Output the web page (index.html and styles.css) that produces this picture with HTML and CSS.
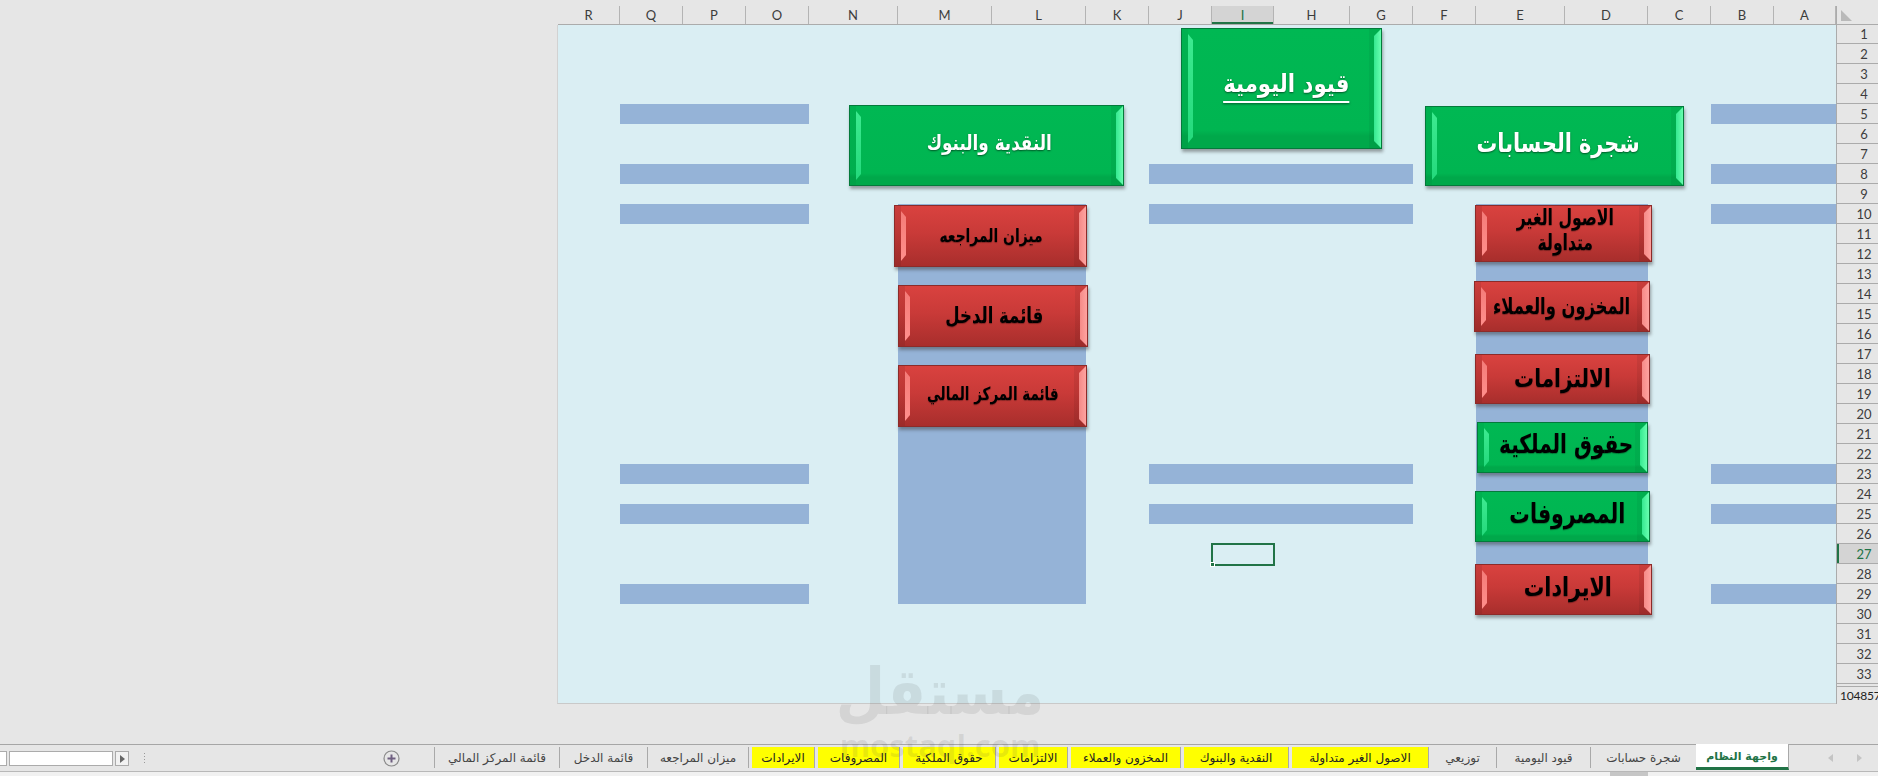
FILE: index.html
```html
<!DOCTYPE html>
<html lang="ar">
<head><meta charset="utf-8"><title>واجهة النظام</title><link rel="stylesheet" href="styles.css"></head>
<body>
<div class="app">
  <div class="colheads">
    <span>R</span><span>Q</span><span>P</span><span>O</span><span>N</span><span>M</span><span>L</span><span>K</span><span>J</span><span class="sel">I</span><span>H</span><span>G</span><span>F</span><span>E</span><span>D</span><span>C</span><span>B</span><span>A</span>
  </div>
  <div class="corner"><i></i></div>

  <div class="sheet">
    <div class="bar c-left r5"></div><div class="bar c-left r8"></div><div class="bar c-left r10"></div><div class="bar c-left r23"></div><div class="bar c-left r25"></div><div class="bar c-left r29"></div>
    <div class="bar c-mid r8"></div><div class="bar c-mid r10"></div><div class="bar c-mid r23"></div><div class="bar c-mid r25"></div>
    <div class="bar c-right r5"></div><div class="bar c-right r8"></div><div class="bar c-right r10"></div><div class="bar c-right r23"></div><div class="bar c-right r25"></div><div class="bar c-right r29"></div>
    <div class="bar c-ml block-ml"></div>
    <div class="bar c-ed block-ed"></div>
    <div class="cell-sel"><i></i></div>

    <div class="btn green white b-qoyud"><span><u>قيود اليومية</u></span></div>
    <div class="btn green white b-cash"><span>النقدية والبنوك</span></div>
    <div class="btn green white b-tree"><span>شجرة الحسابات</span></div>
    <div class="btn red b-mizan"><span>ميزان المراجعه</span></div>
    <div class="btn red b-income"><span>قائمة الدخل</span></div>
    <div class="btn red b-fin"><span>قائمة المركز المالي</span></div>
    <div class="btn red b-assets"><span>الاصول الغير<br>متداولة</span></div>
    <div class="btn red b-inv"><span>المخزون والعملاء</span></div>
    <div class="btn red b-liab"><span>الالتزامات</span></div>
    <div class="btn green b-eq"><span>حقوق الملكية</span></div>
    <div class="btn green b-exp"><span>المصروفات</span></div>
    <div class="btn red b-rev"><span>الايرادات</span></div>
  </div>

  <div class="rowheads">
    <span>1</span><span>2</span><span>3</span><span>4</span><span>5</span><span>6</span><span>7</span><span>8</span><span>9</span><span>10</span><span>11</span><span>12</span><span>13</span><span>14</span><span>15</span><span>16</span><span>17</span><span>18</span><span>19</span><span>20</span><span>21</span><span>22</span><span>23</span><span>24</span><span>25</span><span>26</span><span class="sel">27</span><span>28</span><span>29</span><span>30</span><span>31</span><span>32</span><span>33</span><span class="gap"></span><span class="last">1048576</span>
  </div>

  <div class="tabbar">
    <div class="hscroll">
      <b class="sb-stub"></b><b class="sb-track"></b>
      <b class="sb-btn"><svg width="5" height="8" viewBox="0 0 5 8"><path d="M0 0 5 4 0 8Z" fill="#666"/></svg></b>
      <svg class="sb-dots" width="3" height="11" viewBox="0 0 3 11"><path d="M1 0h1v1H1zM1 3h1v1H1zM1 6h1v1H1zM1 9h1v1H1z" fill="#999"/></svg>
    </div>
    <div class="plus">
      <svg width="17" height="17" viewBox="0 0 17 17"><circle cx="8.5" cy="8.5" r="7.5" fill="none" stroke="#8a8a8a" stroke-width="1.2"/><path d="M8.5 4.5v8M4.5 8.5h8" stroke="#6f5f80" stroke-width="2"/></svg>
    </div>
    <div class="tabs">
      <div class="tab">قائمة المركز المالي</div>
      <div class="tab">قائمة الدخل</div>
      <div class="tab">ميزان المراجعه</div>
      <div class="tab yellow">الايرادات</div>
      <div class="tab yellow">المصروفات</div>
      <div class="tab yellow">حقوق الملكية</div>
      <div class="tab yellow">الالتزامات</div>
      <div class="tab yellow">المخزون والعملاء</div>
      <div class="tab yellow">النقدية والبنوك</div>
      <div class="tab yellow">الاصول الغير متداولة</div>
      <div class="tab">توزيعي</div>
      <div class="tab">قيود اليومية</div>
      <div class="tab">شجرة حسابات</div>
      <div class="tab active">واجهة النظام</div>
    </div>
    <div class="tabnav">
      <svg width="5" height="8" viewBox="0 0 5 8"><path d="M5 0 0 4 5 8Z" fill="#c4c4c4"/></svg>
      <svg width="5" height="8" viewBox="0 0 5 8"><path d="M0 0 5 4 0 8Z" fill="#c4c4c4"/></svg>
    </div>
  </div>
  <div class="statusline"><i></i></div>

  <div class="watermark"><span class="wm-ar">مستقل</span><span class="wm-en">mostaql.com</span></div>
</div>
</body>
</html>
```
FILE: styles.css
```css
* { box-sizing: border-box; }
html, body { margin: 0; height: 100%; overflow: hidden; background: #e6e6e6; }

.app {
  position: relative;
  width: 1878px;
  height: 776px;
  overflow: hidden;
  display: grid;
  grid-template-columns: 558px 1278px 42px;
  grid-template-rows: 6px 19px 679px 40px 28px 4px;
  font-family: Lato, "Liberation Sans", sans-serif;
  color: #333;
}

/* column headers */
.colheads {
  grid-column: 2;
  grid-row: 2;
  display: grid;
  grid-template-columns: 62px 63px 63px 63px 89px 94px 94px 63px 63px 62px 76px 63px 63px 89px 83px 63px 63px 62px;
  border-bottom: 1px solid #ababab;
}
.colheads span {
  display: flex;
  align-items: center;
  justify-content: center;
  font-size: 13px;
  color: #3c3c3c;
  border-right: 1px solid #b4b4b4;
}
.colheads span.sel {
  background: #d4d4d4;
  color: #217346;
  box-shadow: inset 0 -2px 0 #217346;
}
.corner {
  grid-column: 3;
  grid-row: 2;
  border-left: 1px solid #ababab;
  border-bottom: 1px solid #ababab;
  padding: 4px 0 0 4px;
}
.corner i {
  display: block;
  width: 11px;
  height: 11px;
  background: #b9b9b9;
  clip-path: polygon(0 0, 100% 100%, 0 100%);
}

/* worksheet */
.sheet {
  grid-column: 2;
  grid-row: 3;
  position: relative;
  background: #daeef3;
  border-left: 1px solid #d2d2d2;
  border-bottom: 1px solid #c9c9c9;
  margin-left: -1px;
  display: grid;
  grid-template-columns: 62px 63px 63px 63px 89px 94px 94px 63px 63px 62px 76px 63px 63px 89px 83px 63px 63px 62px;
  grid-template-rows: 19px repeat(32, 20px) 3px 16px;
}
.bar { background: #95b3d7; }
.c-left { grid-column: 2 / 5; }
.c-mid { grid-column: 9 / 13; }
.c-right { grid-column: 17 / 19; }
.c-ml { grid-column: 6 / 8; }
.c-ed { grid-column: 14 / 16; }
.r5 { grid-row: 5; }
.r8 { grid-row: 8; }
.r10 { grid-row: 10; }
.r23 { grid-row: 23; }
.r25 { grid-row: 25; }
.r29 { grid-row: 29; }
.block-ml { grid-row: 10 / 30; }
.block-ed { grid-row: 10 / 29; }
.cell-sel {
  grid-column: 10;
  grid-row: 27;
  position: relative;
  margin: -1px -1px -2px -1px;
  border: 2px solid #217346;
}
.cell-sel i {
  position: absolute;
  left: -3px;
  bottom: -3px;
  width: 5px;
  height: 5px;
  background: #217346;
  border: 1px solid #fff;
}

/* bevelled shapes */
.btn {
  position: absolute;
  display: flex;
  align-items: center;
  justify-content: center;
  text-align: center;
  font-family: "DejaVu Sans", "Liberation Sans", sans-serif;
  font-weight: 700;
  color: #000;
  border: 1px solid;
  box-shadow: 1px 3px 3px rgba(60, 60, 60, .45);
  text-shadow: 0 1px 1px rgba(0, 0, 0, .3);
}
.btn span { display: inline-block; white-space: nowrap; }
.btn.white { color: #fff; text-shadow: 0 1px 2px rgba(0, 0, 0, .5); }
.btn::before,
.btn::after { content: ""; position: absolute; }
.btn::before {
  left: 6px;
  top: 5px;
  bottom: 5px;
  width: 5px;
  clip-path: polygon(0 0, 100% 6px, 100% calc(100% - 6px), 0 100%);
}
.btn::after {
  right: 0;
  top: 0;
  bottom: 0;
  width: 7px;
  clip-path: polygon(100% 0, 0 7px, 0 calc(100% - 7px), 100% 100%);
}
.green {
  border-color: #047a3b;
  background:
    linear-gradient(90deg, rgba(0, 0, 0, .04) 6px, transparent 6px, transparent calc(100% - 12px), rgba(0, 0, 0, .05) calc(100% - 12px)),
    linear-gradient(#00b853, #00b551 85%, #00a84a 90%, #00a84a);
}
.green::before { background: linear-gradient(#3dea90, #24d97c); }
.green::after { background: linear-gradient(90deg, #35e890, #68ffb0); }
.red {
  border-color: #8c2b29;
  background:
    linear-gradient(90deg, rgba(0, 0, 0, .07) 6px, transparent 6px, transparent calc(100% - 12px), rgba(0, 0, 0, .07) calc(100% - 12px)),
    linear-gradient(#d9423f, #c93a38 45%, #a82e2c);
}
.red::before { background: linear-gradient(#f47b78, #ff8f8c); }
.red::after { background: linear-gradient(90deg, #f58a87, #ffa3a0); }

.b-qoyud  { left: 623px; top: 3px;   width: 201px; height: 121px; font-size: 25px; padding: 0 0 10px 10px; }
.b-qoyud span { transform: scaleX(.85); }
.b-qoyud u { text-decoration-thickness: 2px; text-underline-offset: 9px; }
.b-cash   { left: 291px; top: 80px;  width: 275px; height: 81px;  font-size: 21px; padding: 0 0 5px 6px; }
.b-cash span { transform: scaleX(.8); }
.b-tree   { left: 867px; top: 81px;  width: 259px; height: 80px;  font-size: 26px; padding: 0 0 6px 8px; }
.b-tree span { transform: scaleX(.8); }
.b-mizan  { left: 336px; top: 180px; width: 193px; height: 62px;  font-size: 18px; padding: 0 0 2px 1px; }
.b-mizan span { transform: scaleX(.77); }
.b-income { left: 340px; top: 260px; width: 190px; height: 62px;  font-size: 22px; padding: 0 0 2px 2px; }
.b-income span { transform: scaleX(.75); }
.b-fin    { left: 340px; top: 340px; width: 189px; height: 62px;  font-size: 18px; padding: 0 0 6px 1px; }
.b-fin span { transform: scaleX(.75); }
.b-assets { left: 917px; top: 180px; width: 177px; height: 57px;  font-size: 22px; line-height: 25px; padding: 0 0 7px 3px; }
.b-assets span { transform: scaleX(.71); }
.b-inv    { left: 916px; top: 256px; width: 176px; height: 51px;  font-size: 23px; padding: 0 0 2px 0; }
.b-inv span { transform: scaleX(.71); }
.b-liab   { left: 917px; top: 329px; width: 175px; height: 50px;  font-size: 25px; padding: 0 0 2px 0; }
.b-liab span { transform: scaleX(.8); }
.b-eq     { left: 919px; top: 397px; width: 171px; height: 51px;  font-size: 26px; padding: 0 0 8px 8px; }
.b-eq span { transform: scaleX(.77); }
.b-exp    { left: 917px; top: 466px; width: 175px; height: 51px;  font-size: 27px; padding: 0 0 7px 9px; }
.b-exp span { transform: scaleX(.76); }
.b-rev    { left: 917px; top: 539px; width: 177px; height: 51px;  font-size: 26px; padding: 0 0 5px 9px; }
.b-rev span { transform: scaleX(.79); }

/* row headers */
.rowheads {
  grid-column: 3;
  grid-row: 3;
  display: grid;
  grid-template-rows: 19px repeat(32, 20px) 3px 17px;
  border-left: 1px solid #ababab;
}
.rowheads span {
  width: 54px;
  display: flex;
  align-items: center;
  justify-content: center;
  font-size: 13px;
  color: #3c3c3c;
  border-bottom: 1px solid #ababab;
}
.rowheads span.sel {
  background: #d4d4d4;
  color: #217346;
  box-shadow: inset 2px 0 0 #217346;
}
.rowheads .gap { border-bottom: 1px solid #ababab; }
.rowheads .last { border-bottom: 0; justify-content: flex-start; padding-left: 3px; color: #222; font-size: 12px; letter-spacing: -.2px; }

/* sheet tabs */
.tabbar {
  grid-column: 1 / -1;
  grid-row: 5;
  display: flex;
  align-items: stretch;
  border-top: 1px solid #a6a6a6;
  border-bottom: 1px solid #b8b8b8;
}
.hscroll {
  width: 349px;
  flex: none;
  display: flex;
  align-items: center;
  gap: 2px;
  padding-top: 1px;
}
.hscroll b { display: block; height: 15px; background: #fff; border: 1px solid #ababab; }
.sb-stub { width: 7px; border-left: 0 !important; }
.sb-track { width: 104px; }
.sb-btn { width: 14px; background: #f2f2f2 !important; display: flex !important; align-items: center; justify-content: center; }
.sb-dots { margin-left: 12px; }
.plus {
  width: 85px;
  flex: none;
  display: flex;
  align-items: center;
  padding-left: 34px;
}
.tabs {
  display: grid;
  grid-template-columns: 125px 88px 101px 66px 85px 96px 72px 113px 108px 140px 68px 94px 106px 93px;
  flex: none;
}
.tab {
  display: flex;
  align-items: center;
  justify-content: center;
  margin: 2px 0 3px;
  border-left: 1px solid #a9a9a9;
  font-family: "DejaVu Sans", "Liberation Sans", sans-serif;
  font-size: 12px;
  color: #444;
  white-space: nowrap;
}
.tab.yellow {
  color: #222;
  padding-left: 3px;
  background: #ffff00 content-box;
}
.tab.active {
  margin: -1px 0 1px;
  padding-top: 1px;
  border-left: 0;
  background: #fff;
  color: #217346;
  font-size: 11px;
  font-weight: 700;
  border-bottom: 3px solid #217346;
  border-right: 1px solid #a9a9a9;
}
.tabnav {
  flex: 1;
  display: flex;
  align-items: center;
  justify-content: flex-end;
  gap: 24px;
  padding-right: 16px;
}
.statusline { grid-column: 1 / -1; grid-row: 6; background: #f1f1f1; padding-left: 1610px; }
.statusline i { display: block; width: 38px; height: 4px; background: #c6c6c6; }

/* watermark */
.watermark {
  position: absolute;
  left: 838px;
  top: 656px;
  width: 204px;
  display: flex;
  flex-direction: column;
  align-items: center;
  pointer-events: none;
  color: rgba(80, 80, 80, .12);
  font-weight: 700;
}
.wm-ar { font-family: "DejaVu Sans", sans-serif; font-size: 64px; line-height: 72px; transform: scaleX(.89); }
.wm-en { font-family: "Open Sans", sans-serif; font-size: 31px; line-height: 24px; margin-top: 5px; white-space: nowrap; }
```
